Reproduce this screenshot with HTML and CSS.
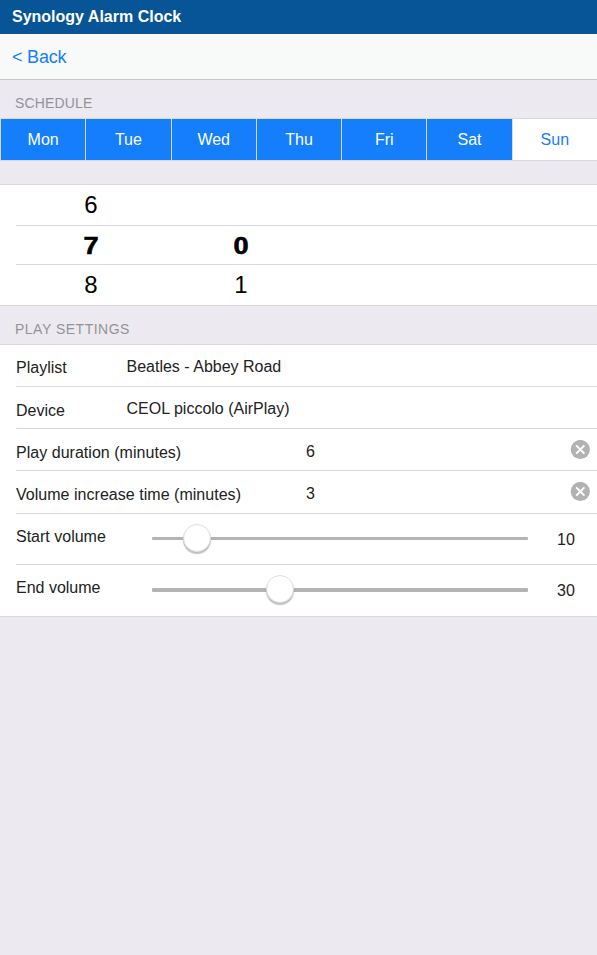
FILE: index.html
```html
<!DOCTYPE html>
<html lang="en">
<head>
<meta charset="utf-8">
<title>Synology Alarm Clock</title>
<link rel="stylesheet" href="styles.css">
</head>
<body>
<header class="title"><span>Synology Alarm Clock</span></header>
<nav class="toolbar"><a class="back">&lt; Back</a></nav>
<h2 class="heading"><span>SCHEDULE</span></h2>
<div class="days">
  <div class="day on"><span>Mon</span></div>
  <div class="day on"><span>Tue</span></div>
  <div class="day on"><span>Wed</span></div>
  <div class="day on"><span>Thu</span></div>
  <div class="day on"><span>Fri</span></div>
  <div class="day on"><span>Sat</span></div>
  <div class="day"><span>Sun</span></div>
</div>
<section class="picker">
  <div class="time"><span>6</span><span></span></div>
  <div class="time current"><span>7</span><span>0</span></div>
  <div class="time"><span>8</span><span>1</span></div>
</section>
<h2 class="heading play"><span>PLAY SETTINGS</span></h2>
<section class="settings">
  <div class="row"><label class="short playlist"><span>Playlist</span></label><div class="value"><span>Beatles - Abbey Road</span></div></div>
  <div class="row"><label class="short"><span>Device</span></label><div class="value"><span>CEOL piccolo (AirPlay)</span></div></div>
  <div class="row"><label class="long"><span>Play duration (minutes)</span></label><div class="value number"><span>6</span></div>
    <svg class="clear" width="20" height="20" viewBox="0 0 20 20"><circle cx="10.3" cy="9.5" r="9.6"/><path d="M6.2 5.4l8.2 8.2M14.4 5.4l-8.2 8.2"/></svg></div>
  <div class="row tall"><label class="long"><span>Volume increase time (minutes)</span></label><div class="value number"><span>3</span></div>
    <svg class="clear" width="20" height="20" viewBox="0 0 20 20"><circle cx="10.3" cy="9.5" r="9.6"/><path d="M6.2 5.4l8.2 8.2M14.4 5.4l-8.2 8.2"/></svg></div>
  <div class="row slider"><label><span>Start volume</span></label><div class="track"><i class="knob start"></i></div><output>10</output></div>
  <div class="row slider end"><label><span>End volume</span></label><div class="track"><i class="knob finish"></i></div><output>30</output></div>
</section>
</body>
</html>
```

FILE: styles.css
```css
* { box-sizing: border-box; }
body {
  margin: 0;
  min-height: 955px;
  background: #eceaf0;
  color: #222;
  font: 16px/20px "Liberation Sans", Arial, sans-serif;
}
.title {
  height: 34px;
  padding: 7px 12px;
  background: #075596;
  color: #fff;
  font-weight: bold;
}
.toolbar {
  height: 46px;
  padding: 13px 12px;
  background: #f8faf9;
  border-bottom: 1px solid #c8c8cb;
}
.back { color: #147efb; font-size: 18px; letter-spacing: -0.2px; }
.heading {
  height: 38px;
  margin: 0;
  padding: 13px 15px 0;
  color: #939395;
  font-size: 14px;
  font-weight: normal;
  letter-spacing: 0.15px;
}
.heading.play { letter-spacing: 0.5px; }
.days {
  display: grid;
  grid-template-columns: repeat(7, 1fr);
  height: 43px;
  border: solid #d9d9dc;
  border-width: 1px 0;
}
.day {
  padding-top: 11px;
  border-left: 1px solid #d9d9dc;
  background: #fff;
  color: #147efb;
  text-align: center;
}
.day.on { background: #147efb; color: #fff; }
.picker {
  margin-top: 23px;
  height: 122px;
  padding-left: 16px;
  background: #fff;
  border: solid #d9d9dc;
  border-width: 1px 0;
}
.time {
  display: grid;
  grid-template-columns: 150px 150px;
  height: 40px;
  padding-top: 5px;
  color: #000;
  font-size: 24px;
  line-height: 30px;
  text-align: center;
}
.time.current {
  border: solid #d9d9dc;
  border-width: 1px 0;
  font-weight: bold;
  -webkit-text-stroke: 0.6px #000;
}
.time.current span { transform: scaleX(1.13); }
.settings {
  background: #fff;
  padding-left: 16px;
  border: solid #d9d9dc;
  border-width: 1px 0;
}
.row {
  display: flex;
  height: 42px;
  padding-top: 12px;
  border-bottom: 1px solid #d9d9dc;
}
.row label { padding-top: 2px; }
.row .playlist { padding-top: 1px; }
.short { width: 110.5px; }
.long { width: 290px; letter-spacing: 0.03px; }
.value { flex: 1; }
.number { padding-top: 1px; }
.clear { margin: -1px 7px 0 0; fill: #b2b2b2; stroke: #fff; }
.clear circle { stroke: none; }
.clear path { fill: none; stroke-width: 2; }
.tall { height: 43px; }
.slider { height: 51px; }
.slider label { width: 136px; padding-top: 1px; }
.track {
  width: 376px;
  height: 3px;
  margin-top: 11px;
  border-radius: 1px;
  background: #b4b4b4;
}
.knob {
  display: block;
  width: 28px;
  height: 28px;
  margin-top: -13px;
  border: 1px solid #dedede;
  border-radius: 50%;
  background: #fff;
  box-shadow: 0 2px 1px rgba(0, 0, 0, .25);
}
.start { margin-left: 31px; }
.finish { margin-left: 114px; }
.slider output { margin: 4px 0 0 29px; }
.end { border-bottom: 0; }
.end .track { height: 4px; }
```
